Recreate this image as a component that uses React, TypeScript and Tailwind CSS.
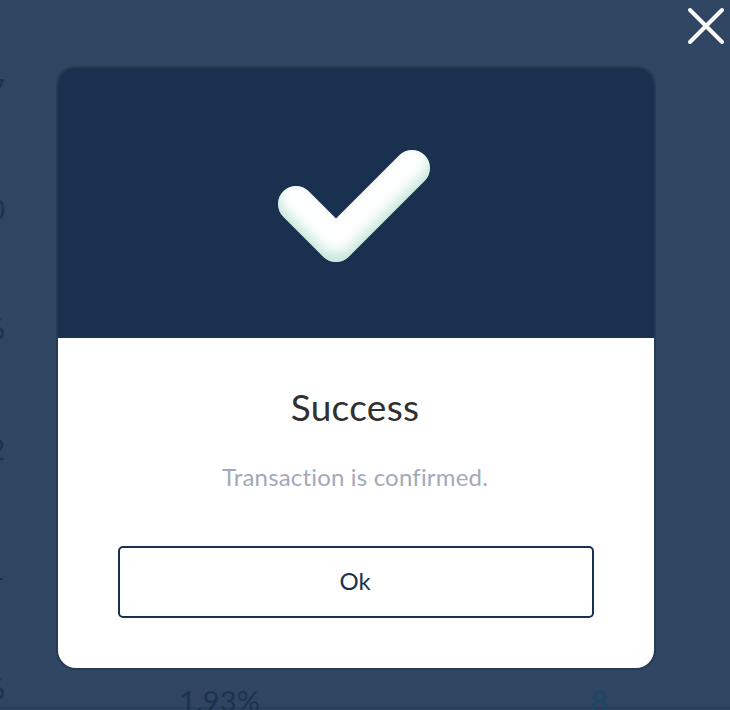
const rows = ["7", "0", "6", "2", "1"];

function Backdrop() {
  return (
    <div className="h-full w-full overflow-hidden pt-[42px] text-[28px] leading-9 text-[#1b3350]">
      {rows.map((n) => (
        <div key={n} className="flex h-[120px] border-b border-[#2e4360] pt-[29px]">
          <span className="flex w-[5px] justify-end">{n}</span>
        </div>
      ))}
      <div className="flex h-[67px] border-b-2 border-[#263e5b] pt-[29px]">
        <span className="flex w-[5px] shrink-0 justify-end">6</span>
        <span className="ml-[174px] w-[86px] shrink-0 pt-3 text-[29px] tracking-[0.1px]">1.93%</span>
        <span className="ml-[326px] pt-3 text-[29px] text-[#1c4861]">8</span>
      </div>
    </div>
  );
}

function CheckMark() {
  return (
    <svg width="160" height="120" viewBox="274 146 160 120" aria-hidden="true">
      <defs>
        <filter id="innerShade" filterUnits="userSpaceOnUse" x="254" y="126" width="200" height="160" colorInterpolationFilters="sRGB">
          <feOffset in="SourceAlpha" dy="-8" result="moved" />
          <feGaussianBlur in="moved" stdDeviation="6.5" result="soft" />
          <feComposite in="SourceAlpha" in2="soft" operator="out" result="edge" />
          <feFlood floodColor="#a5d6c7" floodOpacity="0.68" />
          <feComposite in2="edge" operator="in" result="shade" />
          <feMerge>
            <feMergeNode in="SourceGraphic" />
            <feMergeNode in="shade" />
          </feMerge>
        </filter>
      </defs>
      <path d="M296 204L336 244L412 168" fill="none" stroke="#fff" strokeWidth="36" strokeLinecap="round" strokeLinejoin="round" filter="url(#innerShade)" />
    </svg>
  );
}

export default function App() {
  return (
    <div className="relative h-[710px] w-[730px] overflow-hidden bg-[#2f4561] font-['Lato','Noto_Sans',sans-serif] [font-variant-ligatures:none]">
      <Backdrop />
      <button aria-label="Close" className="absolute top-[7px] right-[5px]">
        <svg width="38" height="38" viewBox="0 0 38 38" fill="none" stroke="#fafafa" strokeWidth="4" strokeLinecap="round">
          <path d="M3 3L35 35M35 3L3 35" />
        </svg>
      </button>
      <div role="dialog" className="absolute top-[66px] left-[56px] h-[604px] w-[600px] rounded-[20px] bg-[#263b53] p-[2px]">
        <div className="flex h-[270px] items-center justify-center rounded-t-[18px] bg-[#19314e] pt-[6px] pr-1">
          <CheckMark />
        </div>
        <div className="flex h-[330px] flex-col items-center rounded-b-[18px] bg-white px-[60px] pt-[45px]">
          <h1 className="h-12 pr-[2px] text-[37px] leading-[48px] tracking-[0.3px] text-[#303030]">Success</h1>
          <p className="mt-[30px] h-8 pr-[2px] text-[24px] leading-8 tracking-[0.18px] text-[#a2aaba]">Transaction is confirmed.</p>
          <button className="mt-[53px] h-[72px] w-full rounded-[5px] border-2 border-[#19314e] pr-[2px] pb-[2px] text-[24px] text-[#19314e]">Ok</button>
        </div>
      </div>
    </div>
  );
}
